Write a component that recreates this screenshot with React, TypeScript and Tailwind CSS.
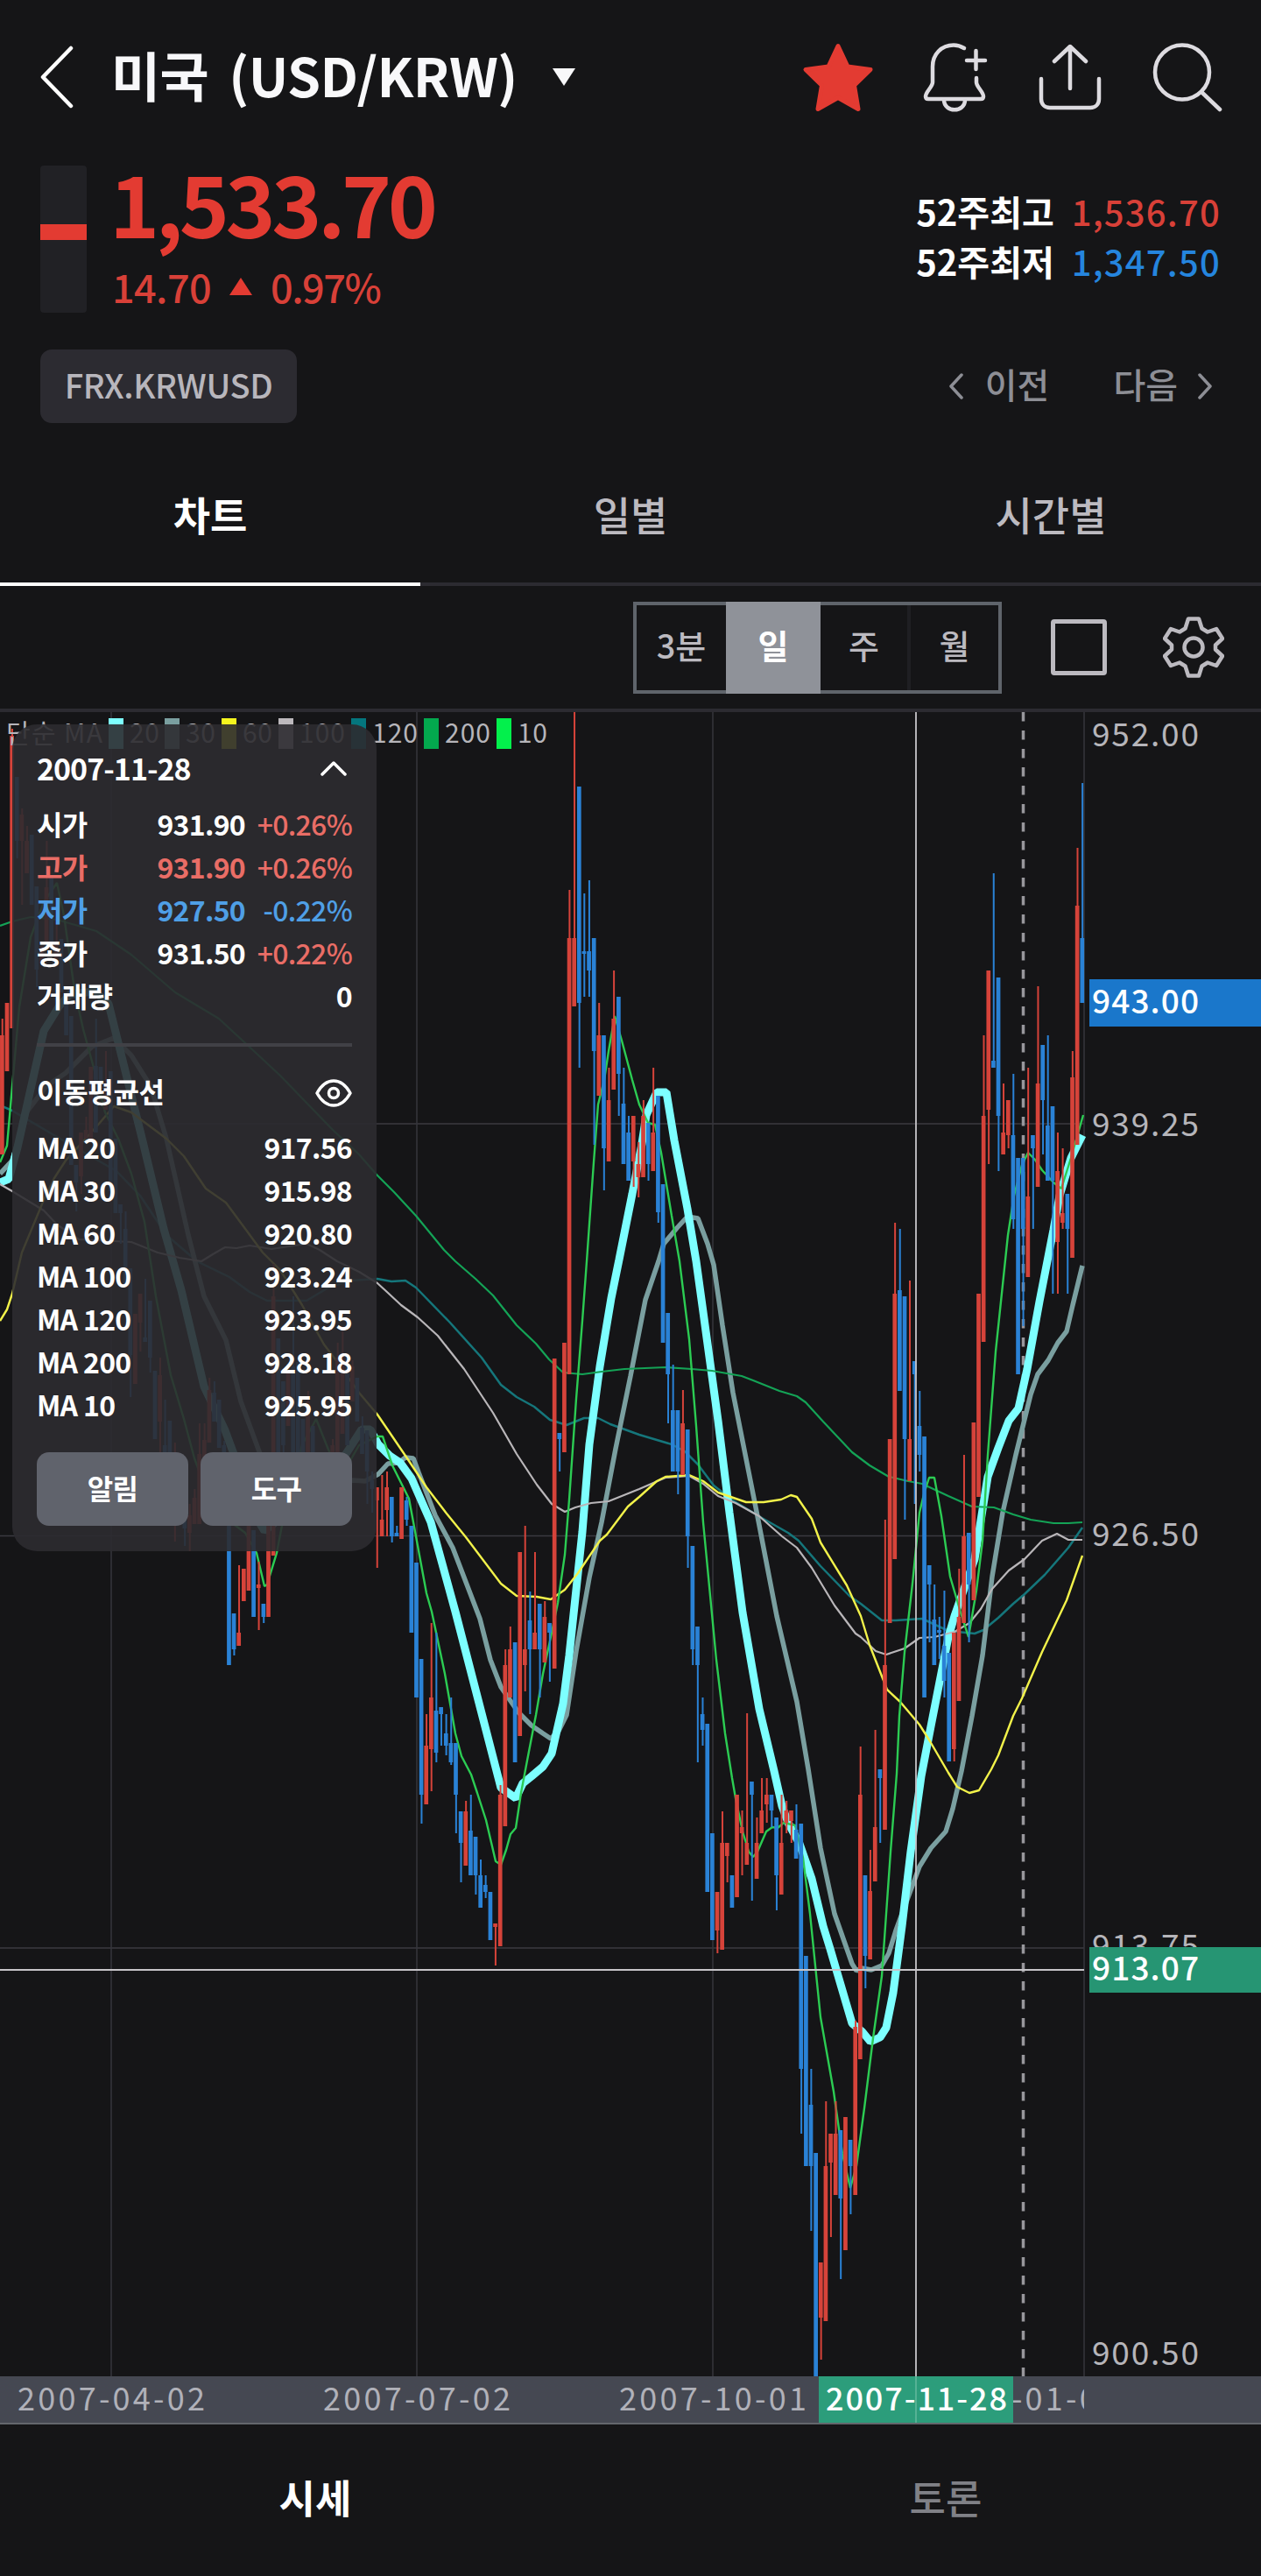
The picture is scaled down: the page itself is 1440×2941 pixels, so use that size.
import React from 'react';

type Candle = [index: number, high: number, top: number, bottom: number, low: number, dir: 0 | 1];

const UP = '#d6433a';
const DOWN = '#2a82d6';
const STEP = 5.632;

// [slot, high, body top, body bottom, low, 1 = up / 0 = down]
const CANDLES: Candle[] = [
  [-115, 1163, 1182, 1318, 1318, 1], [-114, 1145, 1145, 1223, 1223, 1], [-113, 832, 840, 1174, 1174, 1],
  [-112, 887, 887, 960, 980, 0], [-111, 923, 930, 960, 1033, 1], [-110, 943, 960, 997, 997, 1],
  [-109, 953, 953, 1033, 1033, 0], [-108, 1012, 1012, 1107, 1127, 0], [-107, 1080, 1080, 1100, 1100, 1],
  [-106, 960, 1013, 1077, 1077, 1], [-105, 1000, 1000, 1083, 1083, 0], [-104, 1053, 1077, 1100, 1100, 1],
  [-103, 1072, 1072, 1133, 1133, 0], [-102, 1133, 1133, 1182, 1182, 0], [-101, 1160, 1160, 1330, 1330, 0],
  [-100, 1330, 1330, 1350, 1383, 0], [-99, 1293, 1293, 1343, 1363, 1], [-98, 1275, 1290, 1300, 1300, 1],
  [-97, 1218, 1218, 1300, 1300, 1], [-96, 1163, 1217, 1293, 1293, 0], [-95, 1218, 1218, 1243, 1243, 0],
  [-94, 1200, 1250, 1267, 1267, 1], [-93, 1223, 1223, 1360, 1360, 0], [-92, 1300, 1300, 1385, 1385, 0],
  [-91, 1375, 1375, 1385, 1420, 0], [-90, 1383, 1403, 1467, 1467, 0], [-89, 1448, 1448, 1547, 1595, 0],
  [-88, 1500, 1500, 1580, 1580, 1], [-87, 1477, 1477, 1510, 1543, 1], [-86, 1460, 1527, 1532, 1532, 0],
  [-85, 1485, 1485, 1550, 1567, 0], [-84, 1565, 1565, 1643, 1643, 0], [-83, 1550, 1570, 1623, 1660, 1],
  [-82, 1598, 1650, 1662, 1662, 0], [-81, 1622, 1622, 1680, 1680, 0], [-80, 1647, 1690, 1715, 1760, 1],
  [-78, 1690, 1700, 1745, 1765, 0], [-77, 1717, 1730, 1750, 1771, 1], [-76, 1700, 1710, 1740, 1740, 1],
  [-75, 1625, 1660, 1740, 1740, 1], [-74, 1625, 1644, 1700, 1700, 1], [-73, 1573, 1587, 1647, 1647, 1],
  [-72, 1577, 1590, 1623, 1623, 0], [-71, 1598, 1598, 1653, 1653, 0], [-70, 1645, 1650, 1720, 1720, 0],
  [-69, 1700, 1720, 1901, 1901, 0], [-68, 1842, 1842, 1883, 1890, 0], [-67, 1787, 1864, 1879, 1879, 1],
  [-66, 1791, 1791, 1828, 1828, 1], [-65, 1680, 1690, 1816, 1816, 1], [-64, 1747, 1747, 1846, 1846, 0],
  [-63, 1783, 1809, 1813, 1861, 1], [-62, 1831, 1831, 1846, 1853, 0], [-61, 1690, 1720, 1846, 1846, 1],
  [-60, 1443, 1480, 1776, 1776, 1], [-59, 1528, 1528, 1660, 1660, 0], [-58, 1577, 1577, 1650, 1660, 0],
  [-57, 1568, 1568, 1628, 1628, 1], [-56, 1480, 1560, 1660, 1660, 0], [-55, 1555, 1555, 1660, 1660, 0],
  [-54, 1620, 1620, 1660, 1660, 0], [-53, 1588, 1600, 1660, 1660, 1], [-52, 1628, 1628, 1680, 1680, 0],
  [-48, 1643, 1650, 1680, 1680, 1], [-47, 1533, 1550, 1660, 1660, 1], [-46, 1520, 1545, 1637, 1637, 1],
  [-45, 1545, 1545, 1650, 1650, 0], [-44, 1553, 1560, 1600, 1600, 1], [-43, 1573, 1573, 1623, 1623, 0],
  [-42, 1617, 1630, 1660, 1660, 0], [-41, 1633, 1633, 1680, 1717, 0], [-40, 1680, 1690, 1700, 1727, 0],
  [-39, 1698, 1698, 1713, 1790, 1], [-38, 1684, 1735, 1754, 1754, 1], [-37, 1680, 1698, 1724, 1754, 1],
  [-36, 1709, 1709, 1754, 1761, 0], [-35, 1742, 1750, 1754, 1754, 0], [-34, 1698, 1698, 1757, 1757, 1],
  [-33, 1709, 1713, 1735, 1742, 0], [-32, 1742, 1742, 1864, 1864, 0], [-31, 1784, 1784, 1938, 1938, 0],
  [-30, 1894, 1894, 2049, 2082, 0], [-29, 1957, 1993, 2060, 2060, 1], [-28, 1853, 1938, 1997, 2045, 1],
  [-27, 1864, 1953, 2001, 2012, 0], [-26, 1949, 1949, 1957, 1993, 0], [-25, 1957, 1979, 1993, 2004, 0],
  [-24, 1938, 1990, 2012, 2015, 0], [-23, 1990, 1990, 2049, 2093, 0], [-22, 2068, 2068, 2104, 2149, 0],
  [-21, 2056, 2068, 2130, 2130, 1], [-20, 2049, 2090, 2141, 2141, 0], [-19, 2097, 2097, 2141, 2163, 0],
  [-18, 2123, 2141, 2178, 2178, 0], [-17, 2141, 2152, 2160, 2167, 0], [-16, 2160, 2160, 2215, 2215, 0],
  [-15, 2196, 2196, 2200, 2244, 1], [-14, 2038, 2049, 2222, 2222, 1], [-13, 1883, 1901, 2085, 2085, 1],
  [-12, 1857, 1883, 1938, 1938, 1], [-11, 1875, 1875, 2012, 2012, 0], [-10, 1772, 1772, 1982, 1982, 1],
  [-9, 1742, 1883, 1901, 1931, 1], [-8, 1817, 1850, 1883, 1957, 0], [-7, 1772, 1864, 1883, 1883, 1],
  [-6, 1831, 1831, 1883, 1938, 0], [-5, 1828, 1846, 1898, 1898, 1], [-4, 1853, 1853, 1864, 1920, 0],
  [-3, 1551, 1551, 1905, 1905, 1], [-2, 1636, 1636, 1643, 1680, 0], [-1, 1533, 1533, 1658, 1658, 1],
  [0, 1016, 1071, 1569, 1569, 1], [1, 813, 1071, 1149, 1149, 1], [2, 898, 898, 1145, 1219, 0],
  [3, 1020, 1086, 1089, 1138, 0], [4, 1005, 1086, 1108, 1138, 0], [5, 1071, 1071, 1200, 1307, 0],
  [6, 1145, 1182, 1251, 1251, 1], [7, 1182, 1182, 1311, 1359, 0], [8, 1219, 1256, 1326, 1326, 1],
  [9, 1108, 1163, 1244, 1244, 1], [10, 1138, 1138, 1226, 1274, 0], [11, 1219, 1260, 1329, 1329, 0],
  [12, 1274, 1293, 1348, 1348, 0], [13, 1274, 1274, 1326, 1355, 1], [14, 1304, 1329, 1344, 1367, 1],
  [15, 1256, 1274, 1344, 1344, 1], [16, 1282, 1282, 1329, 1348, 0], [17, 1219, 1293, 1337, 1337, 1],
  [18, 1251, 1251, 1384, 1396, 0], [19, 1352, 1352, 1533, 1533, 0], [20, 1499, 1499, 1569, 1625, 0],
  [21, 1558, 1610, 1680, 1680, 0], [22, 1610, 1610, 1680, 1706, 0], [23, 1587, 1625, 1684, 1684, 1],
  [24, 1632, 1632, 1754, 1790, 0], [25, 1765, 1765, 1883, 1901, 0], [26, 1857, 1857, 1901, 2012, 0],
  [27, 1938, 1957, 1975, 1993, 0], [28, 1968, 1968, 2160, 2160, 0], [29, 2093, 2093, 2215, 2215, 0],
  [30, 2160, 2160, 2204, 2230, 1], [31, 2068, 2104, 2226, 2226, 1], [32, 2104, 2104, 2119, 2149, 1],
  [33, 2141, 2141, 2178, 2178, 0], [34, 2049, 2049, 2166, 2166, 1], [35, 2067, 2086, 2093, 2141, 1],
  [36, 1956, 2104, 2129, 2129, 1], [37, 2034, 2034, 2049, 2170, 0], [38, 2075, 2104, 2145, 2145, 1],
  [39, 2030, 2067, 2093, 2093, 1], [40, 2030, 2049, 2060, 2081, 1], [41, 2049, 2049, 2067, 2086, 0],
  [42, 2075, 2075, 2141, 2181, 0], [43, 2049, 2104, 2163, 2163, 1], [44, 2056, 2067, 2081, 2093, 1],
  [45, 2067, 2067, 2079, 2104, 1], [46, 2060, 2089, 2122, 2122, 0], [47, 2082, 2082, 2362, 2436, 0],
  [48, 2233, 2233, 2473, 2473, 0], [49, 2362, 2403, 2473, 2547, 0], [50, 2458, 2458, 2713, 2713, 0],
  [51, 2583, 2583, 2646, 2694, 1], [52, 2399, 2473, 2650, 2650, 1], [53, 2436, 2436, 2469, 2554, 1],
  [54, 2399, 2436, 2506, 2506, 1], [55, 2432, 2432, 2510, 2602, 0], [56, 2417, 2417, 2569, 2569, 1],
  [57, 2443, 2443, 2473, 2528, 0], [58, 2307, 2314, 2506, 2506, 1], [59, 1994, 2049, 2351, 2351, 1],
  [60, 2141, 2141, 2233, 2270, 0], [61, 2112, 2159, 2237, 2237, 1], [62, 1975, 2086, 2148, 2148, 1],
  [63, 2020, 2020, 2030, 2104, 0], [64, 1735, 1901, 2089, 2089, 1], [65, 1643, 1643, 1853, 1853, 1],
  [66, 1396, 1477, 1780, 1780, 1], [67, 1403, 1473, 1588, 1588, 0], [68, 1480, 1480, 1643, 1735, 0],
  [69, 1462, 1643, 1691, 1691, 1], [70, 1554, 1554, 1569, 1717, 0], [71, 1588, 1628, 1661, 1680, 0],
  [72, 1640, 1640, 1938, 1938, 0], [73, 1787, 1787, 1809, 1875, 0], [74, 1809, 1849, 1901, 1901, 0],
  [75, 1846, 1861, 1864, 1894, 0], [76, 1816, 1879, 1919, 1938, 0], [77, 1887, 1887, 2011, 2011, 0],
  [78, 1864, 1864, 1997, 2011, 1], [79, 1791, 1846, 1942, 1942, 1], [80, 1661, 1754, 1853, 1853, 1],
  [81, 1750, 1750, 1809, 1875, 0], [82, 1624, 1624, 1827, 1827, 1], [83, 1477, 1477, 1709, 1709, 1],
  [84, 1182, 1274, 1532, 1532, 1], [85, 1108, 1108, 1267, 1329, 1], [86, 997, 1211, 1219, 1219, 0],
  [87, 1116, 1116, 1274, 1337, 0], [88, 1237, 1293, 1318, 1318, 1], [89, 1256, 1256, 1296, 1311, 1],
  [90, 1226, 1296, 1392, 1403, 0], [91, 1322, 1322, 1569, 1569, 0], [92, 1322, 1322, 1403, 1514, 0],
  [93, 1219, 1366, 1458, 1458, 1], [94, 1296, 1296, 1311, 1403, 0], [95, 1126, 1237, 1355, 1355, 1],
  [96, 1193, 1193, 1256, 1318, 0], [97, 1182, 1285, 1348, 1348, 0], [98, 1263, 1263, 1348, 1477, 0],
  [99, 1293, 1337, 1418, 1477, 1], [100, 1311, 1385, 1396, 1403, 1], [101, 1363, 1363, 1403, 1477, 0],
  [102, 1200, 1230, 1436, 1436, 1], [103, 968, 1034, 1307, 1307, 1], [104, 894, 1071, 1145, 1145, 0],
];

const AVERAGES = [
  {
    color: '#15767b',
    width: 2.5,
    points:
      '0,1262 14,1268 60,1295 133,1337 160,1365 190,1410 225,1440 262,1458 285,1475 305,1485 350,1485 375,1470 400,1462 431,1460 447,1463 463,1462 475,1470 513,1509 550,1550 572,1581 590,1595 610,1606 628,1621 647,1627 667,1619 683,1619 697,1626 730,1638 767,1649 782,1657 797,1672 815,1696 837,1713 870,1733 900,1750 912,1759 937,1788 970,1822 983,1831 1007,1850 1023,1850 1053,1848 1083,1862 1113,1865 1123,1861 1140,1847 1157,1831 1170,1820 1193,1798 1220,1767 1236,1744',
  },
  {
    color: '#7a9fa0',
    width: 5.5,
    points:
      '0,1340 14,1325 30,1270 53,1240 75,1225 105,1195 130,1185 150,1205 172,1240 190,1300 215,1410 233,1480 258,1530 275,1600 297,1660 315,1705 345,1722 385,1695 403,1690 417,1691 432,1683 443,1671 455,1670 463,1664 472,1665 478,1681 497,1730 517,1767 548,1848 560,1895 572,1926 592,1955 607,1970 620,1979 629,1985 638,1976 647,1958 658,1885 673,1801 687,1738 703,1654 720,1571 737,1484 752,1440 758,1420 773,1402 785,1389 797,1391 808,1420 815,1444 825,1513 837,1590 865,1731 887,1845 910,1943 923,2020 937,2110 953,2185 973,2242 978,2250 984,2247 995,2249 1007,2244 1015,2230 1023,2204 1037,2166 1050,2131 1063,2110 1080,2091 1088,2065 1098,2022 1110,1959 1122,1890 1133,1800 1145,1727 1160,1661 1177,1592 1185,1569 1197,1553 1208,1533 1218,1520 1225,1490 1236,1445',
  },
  {
    color: '#7dffff',
    width: 9,
    points:
      '0,1350 10,1346 20,1310 38,1230 50,1177 68,1148 80,1135 108,1132 124,1146 163,1303 187,1403 207,1473 233,1583 257,1633 267,1660 285,1720 302,1748 330,1725 365,1700 395,1660 413,1632 423,1632 432,1649 445,1662 457,1670 470,1688 492,1738 520,1840 572,2041 589,2053 597,2036 607,2028 620,2017 630,2002 643,1945 650,1890 665,1749 673,1649 685,1560 698,1482 707,1438 722,1363 733,1306 738,1273 750,1247 761,1247 770,1302 785,1380 795,1440 803,1498 820,1622 833,1727 848,1841 867,1951 884,2022 893,2062 900,2081 913,2105 927,2145 940,2199 948,2225 973,2310 985,2320 994,2331 1005,2326 1012,2315 1020,2275 1030,2199 1040,2114 1052,2028 1063,1971 1083,1869 1090,1845 1103,1808 1113,1780 1128,1686 1140,1653 1152,1622 1163,1608 1173,1563 1187,1486 1203,1404 1210,1365 1223,1322 1236,1296',
  },
  {
    color: '#b9b6b9',
    width: 2.2,
    points:
      '0,1352 14,1360 50,1382 65,1398 90,1415 150,1418 180,1430 205,1436 230,1440 243,1432 257,1424 270,1425 285,1422 310,1426 350,1420 365,1427 385,1440 410,1452 431,1465 443,1476 458,1490 477,1504 500,1525 530,1563 563,1613 590,1660 613,1695 630,1717 645,1726 657,1721 675,1716 695,1714 710,1708 730,1700 760,1687 787,1685 803,1694 820,1708 840,1716 867,1731 893,1754 910,1767 927,1790 953,1833 977,1865 983,1869 1000,1885 1012,1889 1033,1882 1050,1870 1067,1869 1090,1863 1107,1853 1120,1837 1133,1814 1152,1793 1170,1780 1190,1759 1207,1751 1220,1758 1236,1758',
  },
  {
    color: '#f2f24a',
    width: 2.4,
    points:
      '0,1508 8,1495 14,1477 25,1430 50,1370 62,1345 75,1325 95,1303 113,1283 130,1263 150,1270 190,1300 210,1320 235,1357 258,1373 300,1430 320,1450 345,1490 370,1535 383,1552 410,1590 431,1615 465,1665 487,1698 510,1728 532,1755 572,1808 590,1822 613,1823 629,1826 645,1815 660,1796 685,1759 693,1752 717,1720 730,1709 750,1691 760,1686 787,1684 803,1691 820,1704 852,1715 872,1715 892,1712 903,1707 910,1709 927,1734 937,1761 967,1810 983,1845 993,1878 1013,1929 1028,1943 1050,1969 1062,1988 1083,2024 1093,2040 1107,2047 1118,2044 1132,2020 1140,2004 1157,1959 1167,1939 1190,1886 1218,1827 1236,1776',
  },
  {
    color: '#14a356',
    width: 2.2,
    points:
      '0,1057 14,1052 35,1047 65,1050 110,1063 150,1090 200,1133 250,1163 290,1200 320,1228 380,1290 410,1318 430,1341 450,1361 475,1388 507,1427 520,1440 543,1460 563,1479 590,1513 612,1534 627,1552 643,1567 665,1569 687,1566 713,1563 760,1561 790,1563 813,1565 847,1571 860,1576 890,1588 910,1594 920,1601 940,1623 973,1658 993,1673 1015,1686 1037,1691 1053,1694 1083,1708 1110,1720 1135,1721 1157,1729 1177,1735 1203,1739 1220,1739 1236,1738',
  },
  {
    color: '#2ccc53',
    width: 2.4,
    points:
      '0,1327 8,1308 14,1240 22,1150 35,1070 50,1030 65,1008 73,1045 85,1130 95,1175 110,1230 120,1270 135,1300 150,1340 165,1395 178,1480 195,1570 210,1620 222,1665 235,1700 260,1735 280,1750 293,1773 302,1811 305,1809 316,1773 330,1700 345,1650 361,1620 375,1655 390,1685 410,1650 431,1640 437,1640 448,1673 467,1711 475,1754 487,1819 493,1840 508,1911 520,1979 527,2005 538,2026 545,2047 555,2078 566,2125 572,2129 578,2112 583,2094 589,2087 595,2047 602,2010 612,1958 620,1911 630,1864 637,1830 645,1775 650,1712 658,1597 665,1508 670,1440 678,1327 683,1261 690,1233 695,1200 702,1160 710,1188 722,1233 730,1261 740,1282 748,1284 755,1316 767,1388 776,1440 787,1529 795,1628 803,1738 818,1895 828,1979 836,2030 840,2053 848,2091 855,2114 860,2120 865,2114 875,2091 882,2086 888,2087 895,2081 908,2084 917,2121 925,2185 937,2303 952,2388 962,2459 971,2498 978,2473 987,2407 997,2327 1007,2256 1012,2185 1017,2114 1024,2025 1027,1959 1033,1886 1042,1808 1050,1727 1055,1706 1061,1687 1067,1687 1075,1731 1085,1800 1097,1841 1106,1869 1115,1816 1122,1759 1128,1661 1137,1543 1151,1410 1158,1365 1167,1330 1174,1316 1182,1324 1190,1336 1203,1350 1212,1357 1223,1322 1237,1273',
  },
];

const LEGEND = [
  { x: 124, color: '#7dffff', label: '20', w: 34 },
  { x: 188, color: '#7a9fa0', label: '30', w: 34 },
  { x: 253, color: '#f5f51e', label: '60', w: 34 },
  { x: 318, color: '#bdb9bd', label: '100', w: 52 },
  { x: 401, color: '#04767e', label: '120', w: 52 },
  { x: 484, color: '#03a84e', label: '200', w: 52 },
  { x: 567, color: '#03f04c', label: '10', w: 34 },
];

const QUOTES = [
  { label: '시가', value: '931.90', rate: '+0.26%', tone: 'text-white', rateTone: 'text-[#e96d66]' },
  { label: '고가', value: '931.90', rate: '+0.26%', tone: 'text-[#e96d66]', rateTone: 'text-[#e96d66]' },
  { label: '저가', value: '927.50', rate: '-0.22%', tone: 'text-[#4f9fe6]', rateTone: 'text-[#4f9fe6]' },
  { label: '종가', value: '931.50', rate: '+0.22%', tone: 'text-white', rateTone: 'text-[#e96d66]' },
];

const MA_VALUES = [
  ['MA 20', '917.56'],
  ['MA 30', '915.98'],
  ['MA 60', '920.80'],
  ['MA 100', '923.24'],
  ['MA 120', '923.95'],
  ['MA 200', '928.18'],
  ['MA 10', '925.95'],
];

function Header() {
  return (
    <header className="flex h-[176px] items-center pl-[46px] pr-[44px]">
      <svg width="38" height="72" viewBox="0 0 38 72" fill="none" stroke="#fff" strokeWidth="4.500" strokeLinecap="round" strokeLinejoin="round">
        <path d="M35 3 3 36l32 33" />
      </svg>
      <h1 className="ml-[43px] mb-[6px] whitespace-nowrap text-[61px] font-bold leading-[80px] tracking-[-0.6px] text-[#f8f8fa] [word-spacing:10px]">
        미국 (USD/KRW)
      </h1>
      <svg className="ml-[39px]" width="28" height="22" viewBox="0 0 28 22" fill="#f8f8fa">
        <path d="M1 1h26L14 21z" />
      </svg>
      <div className="ml-auto flex items-center">
        <svg width="82" height="79" viewBox="0 0 82 79" fill="#e33b32" stroke="#e33b32" strokeWidth="5" strokeLinejoin="round">
          <path d="M41 3.500 52 27l26 3.500-18.500 18 4.500 27L41 62.500 18 75.500l4.500-27L4 30.500 30 27z" />
        </svg>
        <svg className="ml-[56px]" width="74" height="79" viewBox="0 0 74 79" fill="none" stroke="#dddbe0" strokeWidth="4.500" strokeLinecap="round" strokeLinejoin="round">
          <path d="M47 6C42 3 38 2.500 35 2.500 21 2.500 11 13 11 27v18c0 5-8 11-8 16 0 2 1 3 3 3h60c2 0 3-1 3-3 0-5-8-11-8-16v-5" />
          <path d="M24 65c0 15 24 15 24 0M60.500 9v21M50 20h21" />
        </svg>
        <svg className="ml-[58px]" width="72" height="76" viewBox="0 0 72 76" fill="none" stroke="#dddbe0" strokeWidth="4.500" strokeLinecap="round" strokeLinejoin="round">
          <path d="M36 51V4M18 20 36 3l18 17M3 40v23c0 6 4 10 10 10h46c6 0 10-4 10-10V40" />
        </svg>
        <svg className="ml-[58px]" width="80" height="79" viewBox="0 0 80 79" fill="none" stroke="#dddbe0" strokeWidth="4.500" strokeLinecap="round">
          <circle cx="34" cy="33.500" r="31" />
          <path d="M56 56l21 20" />
        </svg>
      </div>
    </header>
  );
}

function PriceSummary() {
  return (
    <section className="px-[46px] pt-[13px]">
      <div className="flex h-[168px]">
        <div className="h-[168px] w-[53px] overflow-hidden rounded-[4px] bg-[#212125] pt-[67px]">
          <div className="h-[18px] bg-[#e33b32]" />
        </div>
        <div className="ml-[26px] text-[#e33b32]">
          <div className="h-[104px] text-[97px] font-bold leading-[82px] tracking-[-4.500px]">1,533.70</div>
          <div className="ml-[3px] flex h-[68px] items-center text-[45px] font-medium leading-[68px] tracking-[-0.6px] text-[#d84038]">
            <span>14.70</span>
            <svg className="mx-[20px]" width="28" height="22" viewBox="0 0 28 22" fill="#e33b32">
              <path d="M14 1l13 20H1z" />
            </svg>
            <span className="tracking-[-1.500px]">0.97%</span>
          </div>
        </div>
        <div className="ml-auto pt-[24px] text-[40px] leading-[57px]">
          <div className="flex justify-end gap-[20px]">
            <span className="font-bold text-white">52주최고</span>
            <span className="font-medium tracking-[1.200px] text-[#d84038]">1,536.70</span>
          </div>
          <div className="flex justify-end gap-[20px]">
            <span className="font-bold text-white">52주최저</span>
            <span className="font-medium tracking-[1.200px] text-[#2585de]">1,347.50</span>
          </div>
        </div>
      </div>
      <div className="mt-[42px] flex h-[84px] items-center justify-between">
        <div className="h-[84px] w-[293px] rounded-[13px] bg-[#2c2b31] text-center text-[38px] font-medium leading-[80px] tracking-[-0.4px] text-[#b8b6bc]">
          FRX.KRWUSD
        </div>
        <div className="flex items-center pr-[9px] text-[40px] font-medium leading-[60px] text-[#8d8e95]">
          <Chevron d="M15 2 3 15l12 13" />
          <span className="ml-[24px] mb-[6px]">이전</span>
          <span className="ml-[73px] mb-[6px]">다음</span>
          <Chevron d="M3 2l12 13L3 28" className="ml-[22px]" />
        </div>
      </div>
    </section>
  );
}

function Chevron({ d, className = '' }: { d: string; className?: string }) {
  return (
    <svg className={className} width="18" height="30" viewBox="0 0 18 30" fill="none" stroke="#8d8e95" strokeWidth="3.500" strokeLinecap="round" strokeLinejoin="round">
      <path d={d} />
    </svg>
  );
}

function Tabs() {
  return (
    <nav className="grid h-[186px] grid-cols-3 grid-rows-[186px] text-center text-[46px] font-medium leading-[70px] text-[#bcbac0]">
      <div className="border-b-4 border-white pt-[68px] font-bold text-white">차트</div>
      <div className="border-b-4 border-[#2c2b31] pt-[68px]">일별</div>
      <div className="border-b-4 border-[#2c2b31] pt-[68px]">시간별</div>
    </nav>
  );
}

function Toolbar() {
  return (
    <div className="flex h-[144px] items-center justify-end border-b-4 border-[#2c2b31] pr-[42px]">
      <div className="flex h-[105px] w-[421px] border-4 border-[#5f646b] text-center text-[38px] font-medium leading-[90px] text-[#bcbac0]">
        <div className="w-[102px]">3분</div>
        <div className="-my-1 h-[105px] w-[108px] bg-[#8f9299] font-bold leading-[98px] text-white">일</div>
        <div className="w-[103px] border-r-4 border-[#1f1f23]">주</div>
        <div className="flex-1">월</div>
      </div>
      <div className="ml-[56px] h-[64px] w-[64px] rounded-[4px] border-[5px] border-[#bcbac0]" />
      <svg className="ml-[64px]" width="70" height="70" viewBox="-1 0 70 70" fill="none" stroke="#bcbac0" strokeWidth="4.500" strokeLinejoin="round">
        <path d="M28 2.500h12l3.500 11 6.500 4 10-3.500 7 11-8 7.500v5l8 7.500-7 11-10-3.500-6.500 4-3.500 11H28l-3.500-11-6.500-4L8 56 1 45l8-7.500v-5L1 25l7-11 10 3.500 6.500-4z" />
        <circle cx="34" cy="35" r="10.500" />
      </svg>
    </div>
  );
}

function PriceChart() {
  return (
    <svg className="block" width="1440" height="1955" viewBox="0 813 1440 1955" fontFamily='"Noto Sans CJK KR", sans-serif'>
      {[1283, 1753.5, 2224].map((y) => (
        <path key={y} d={`M0 ${y}H1238`} stroke="#3b3a40" strokeWidth="1.500" />
      ))}
      {[127, 476, 814, 1238].map((x) => (
        <path key={x} d={`M${x} 813V2713`} stroke="#36363c" strokeWidth="1.500" />
      ))}
      <path d="M1168.500 813V2713" stroke="#98979c" strokeWidth="3.500" strokeDasharray="10.500 10.500" />

      {AVERAGES.map((ma) => (
        <polyline key={ma.color} points={ma.points} fill="none" stroke={ma.color} strokeWidth={ma.width} strokeLinejoin="bevel" />
      ))}

      {CANDLES.map(([i, high, top, bottom, low, dir]) => {
        const x = 650 + i * STEP;
        const color = dir ? UP : DOWN;
        return (
          <g key={i} fill={color}>
            <rect x={x - 0.6} y={high} width="2" height={low - high} />
            <rect x={x - 2.3} y={top} width="4.700" height={bottom - top} />
          </g>
        );
      })}

      {/* legend */}
      <g fill="#b6b5ba" fontSize="30">
        <text x="7" y="848" textLength="110">단순 MA</text>
        {LEGEND.map((item) => (
          <g key={item.x}>
            <rect x={item.x} y="820" width="17" height="35" fill={item.color} />
            <text x={item.x + 24} y="848" textLength={item.w}>{item.label}</text>
          </g>
        ))}
      </g>

      {/* price axis */}
      <g fill="#b6b5ba" fontSize="37">
        <text x="1247" y="852" textLength="122">952.00</text>
        <text x="1247" y="1297" textLength="122">939.25</text>
        <text x="1247" y="1765" textLength="122">926.50</text>
        <text x="1247" y="2235" textLength="122">913.75</text>
        <text x="1247" y="2700" textLength="122">900.50</text>
      </g>
      <rect x="1244" y="1118" width="196" height="54" fill="#1a77cb" />
      <text x="1247" y="1157" fontSize="37" fontWeight="500" fill="#fff" textLength="122">943.00</text>
      <rect x="1244" y="2223" width="196" height="52" fill="#269573" />
      <text x="1247" y="2261" fontSize="37" fontWeight="500" fill="#fff" textLength="122">913.07</text>

      {/* date axis */}
      <rect x="0" y="2713" width="1440" height="53" fill="#454852" />
      <rect x="0" y="2766" width="1440" height="2" fill="#63666c" />
      <svg x="0" y="2713" width="1238" height="53" fill="#b0b1b9" fontSize="36">
        <text x="20" y="39" textLength="214">2007-04-02</text>
        <text x="369" y="39" textLength="214">2007-07-02</text>
        <text x="707" y="39" textLength="214">2007-10-01</text>
        <text x="1062" y="39" textLength="214">2008-01-02</text>
      </svg>
      <rect x="935" y="2713" width="222" height="53" fill="#2c9d7b" />

      {/* crosshair */}
      <path d="M0 2249H1238M1046 813V2713" stroke="#c6c4c8" strokeWidth="1.800" />
      <path d="M1046 2713v53" stroke="#5bb498" strokeWidth="1.800" />
      <text x="943" y="2752" fontSize="36" fontWeight="500" fill="#fff" textLength="207">2007-11-28</text>
    </svg>
  );
}

function InfoPanel() {
  return (
    <aside className="absolute left-[14px] top-[14px] h-[944px] w-[416px] rounded-[28px] bg-[#2c2b30]/90 px-[28px] text-[32px] font-medium leading-[49px] tracking-[-0.7px] text-white">
      <div className="flex items-center justify-between pt-[25px]">
        <span className="text-[34px] font-bold tracking-[-1px]">2007-11-28</span>
        <svg className="mr-[6px]" width="30" height="18" viewBox="0 0 30 18" fill="none" stroke="#fff" strokeWidth="3.500" strokeLinecap="round" strokeLinejoin="round">
          <path d="M2 16 15 3l13 13" />
        </svg>
      </div>
      <div className="mt-[15px]">
        {QUOTES.map((q) => (
          <div key={q.label} className={`flex ${q.tone}`}>
            <span className="flex-1 font-bold">{q.label}</span>
            <span className="font-bold">{q.value}</span>
            <span className={`w-[122px] text-right ${q.rateTone}`}>{q.rate}</span>
          </div>
        ))}
        <div className="flex justify-between font-bold">
          <span>거래량</span>
          <span>0</span>
        </div>
      </div>
      <div className="mt-[30px] h-[4px] bg-[#414146]" />
      <div className="mt-[26px] flex items-center justify-between">
        <span className="font-bold tracking-[-0.3px]">이동평균선</span>
        <svg className="mt-[4px]" width="42" height="32" viewBox="0 0 42 32" fill="none" stroke="#fff" strokeWidth="3.500" strokeLinejoin="round">
          <path d="M2 16C7 7 14 2 21 2s14 5 19 14c-5 9-12 14-19 14S7 25 2 16z" />
          <circle cx="21" cy="16" r="5.500" />
        </svg>
      </div>
      <div className="mt-[15px] font-bold">
        {MA_VALUES.map(([label, value]) => (
          <div key={label} className="flex justify-between">
            <span>{label}</span>
            <span>{value}</span>
          </div>
        ))}
      </div>
      <div className="mt-[30px] flex gap-[14px] text-center font-bold leading-[80px]">
        <div className="h-[84px] flex-1 rounded-[14px] bg-[#60636c]">알림</div>
        <div className="h-[84px] flex-1 rounded-[14px] bg-[#60636c]">도구</div>
      </div>
    </aside>
  );
}

function BottomNav() {
  return (
    <nav className="grid h-[173px] grid-cols-2 text-center text-[45px] leading-[166px]">
      <div className="font-bold text-white">시세</div>
      <div className="font-medium text-[#808187]">토론</div>
    </nav>
  );
}

export default function App() {
  return (
    <div className="h-[2941px] w-[1440px] overflow-hidden bg-[#151517] font-['Noto_Sans_CJK_KR',sans-serif]">
      <Header />
      <PriceSummary />
      <Tabs />
      <Toolbar />
      <div className="relative">
        <PriceChart />
        <InfoPanel />
      </div>
      <BottomNav />
    </div>
  );
}
